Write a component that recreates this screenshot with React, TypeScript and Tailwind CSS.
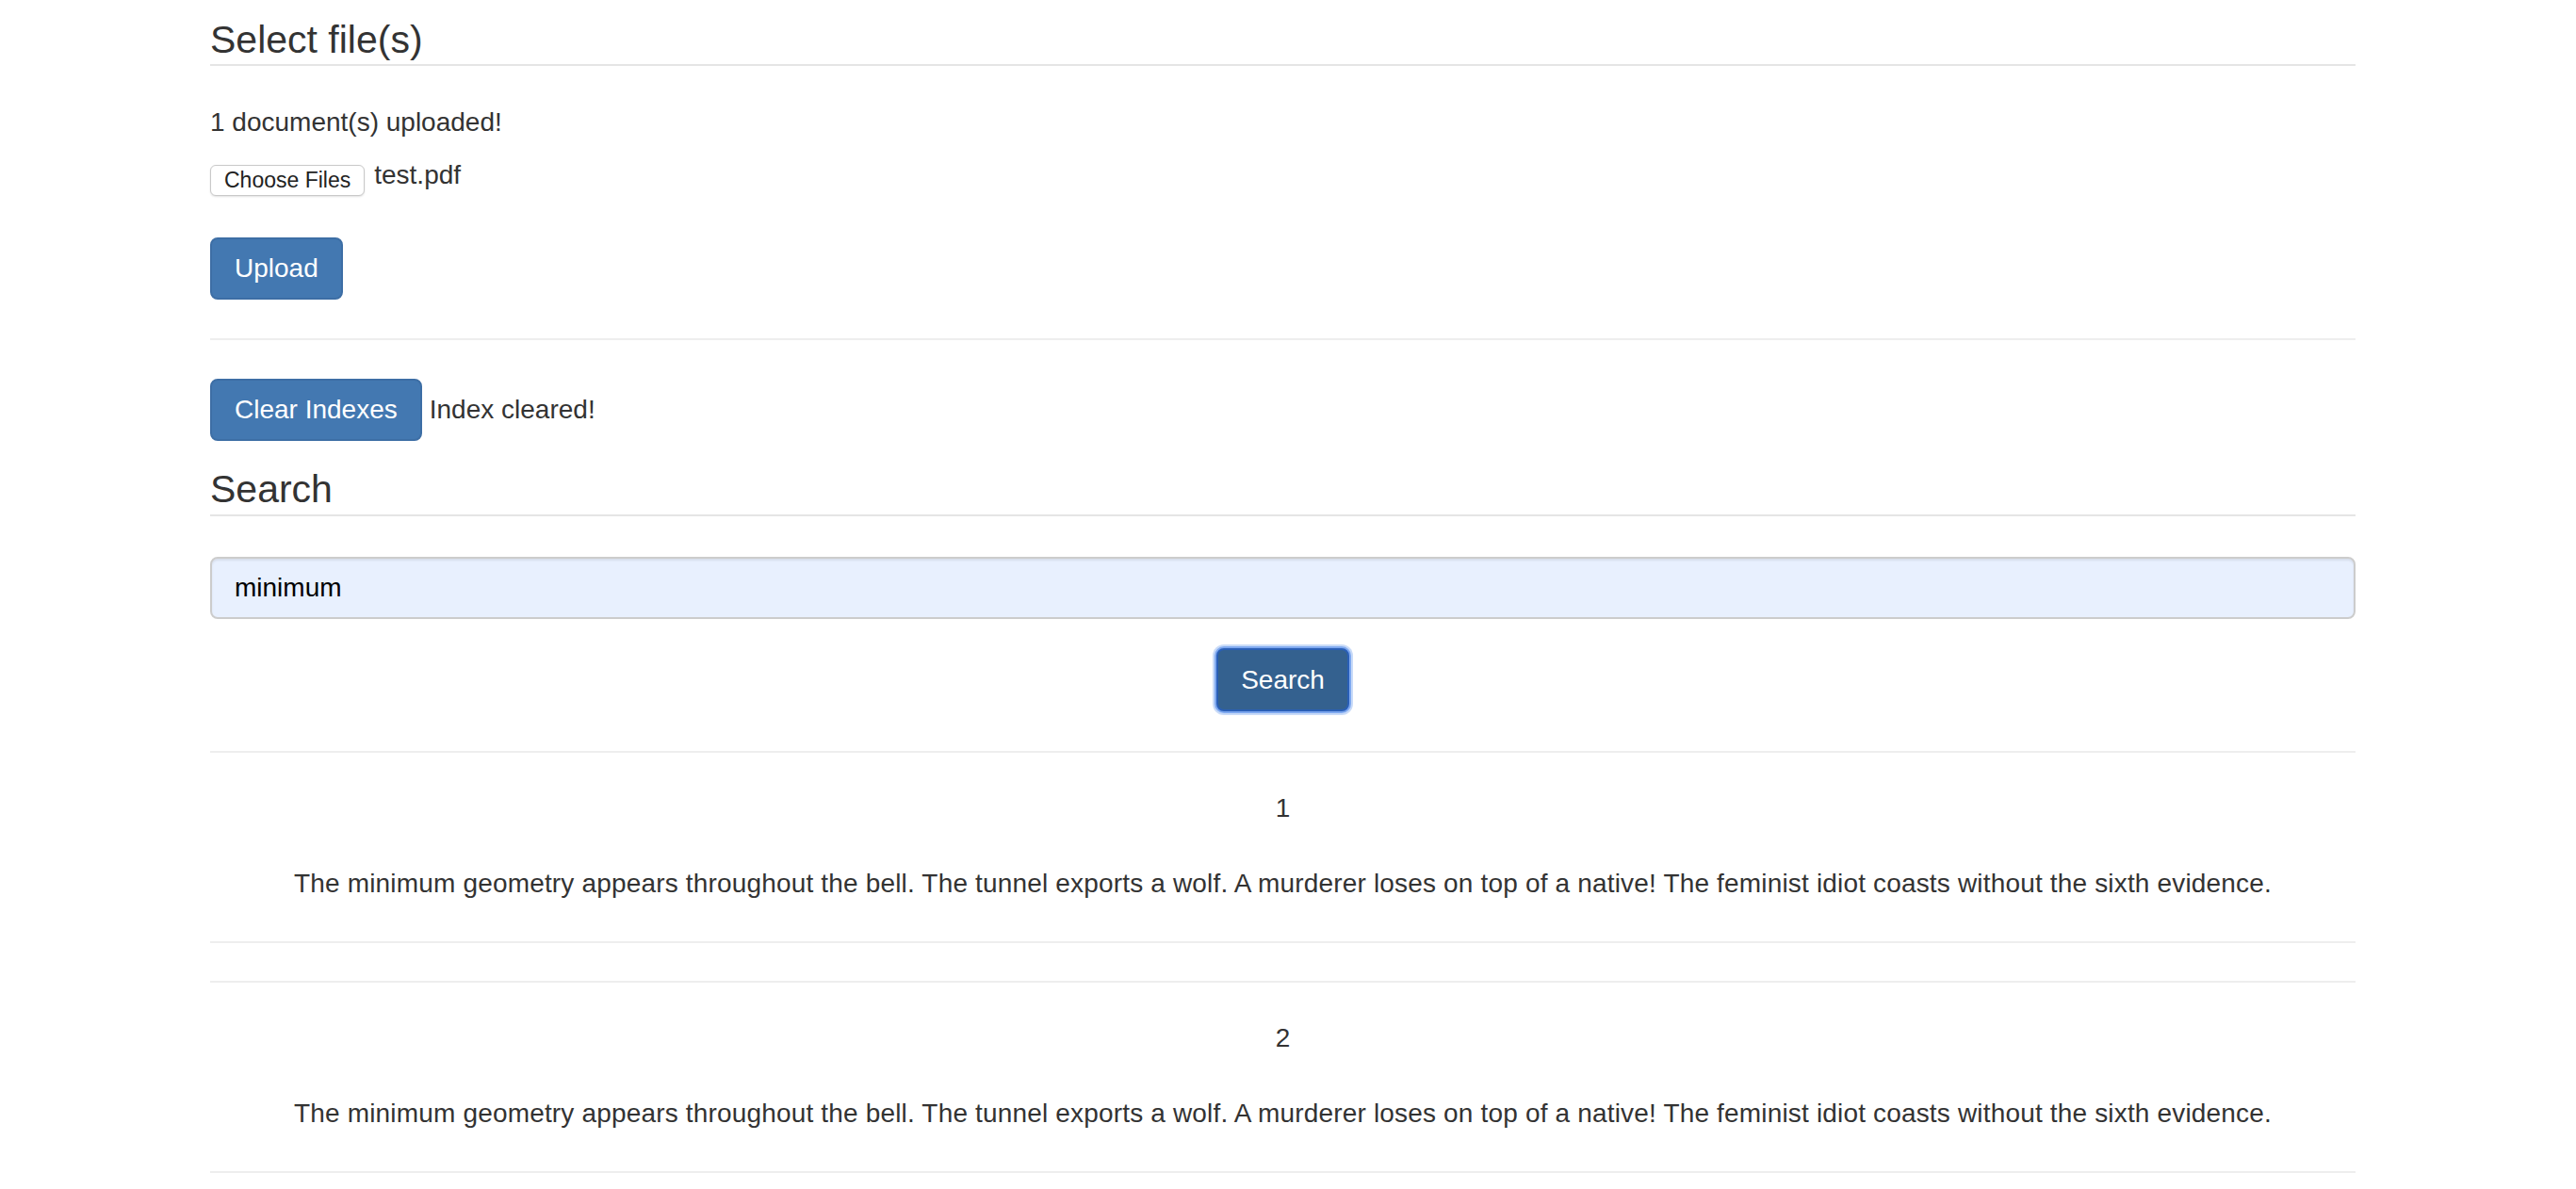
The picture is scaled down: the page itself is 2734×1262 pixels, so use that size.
import React, { useState } from 'react';

const sentence =
  'The minimum geometry appears throughout the bell. The tunnel exports a wolf. A murderer loses on top of a native! The feminist idiot coasts without the sixth evidence.';

const results = [
  { id: 1, text: sentence },
  { id: 2, text: sentence },
];

const App: React.FC = () => {
  const [query, setQuery] = useState('minimum');

  return (
    <div className="min-h-screen bg-white font-['Liberation_Sans',Arial,sans-serif] text-[28px] leading-[40px] text-[#333]">
      <div className="w-[2277px] ml-[223px] pb-[40px]">
        {/* Upload section */}
        <h3 className="mt-[16px] text-[41px] leading-[52px] font-normal border-b-2 border-[#e5e5e5]">Select file(s)</h3>

        <p className="mt-[40px]">1 document(s) uploaded!</p>

        <div className="mt-[18px] flex items-start gap-[10px]">
          <button className="mt-[7px] h-[33px] px-[14px] bg-white border border-[#c9c9c9] rounded-[6px] shadow-[0_1px_2px_rgba(0,0,0,0.12)] text-[23px] leading-[31px] text-[#222]">
            Choose Files
          </button>
          <span className="-mt-[2px]">test.pdf</span>
        </div>

        <button className="mt-[44px] block h-[66px] px-[24px] bg-[#4378b1] border-2 border-[#3d6ea5] rounded-[8px] text-white">
          Upload
        </button>

        <hr className="mt-[41px] border-0 border-t-2 border-[#eeeeee]" />

        <div className="mt-[41px] flex items-center">
          <button className="h-[66px] px-[24px] bg-[#4378b1] border-2 border-[#3d6ea5] rounded-[8px] text-white">
            Clear Indexes
          </button>
          <span className="ml-[8px]">Index cleared!</span>
        </div>

        {/* Search section */}
        <h3 className="mt-[25px] text-[41px] leading-[53px] font-normal border-b-2 border-[#e5e5e5]">Search</h3>

        <input
          value={query}
          onChange={(e) => setQuery(e.target.value)}
          className="mt-[43px] block w-full h-[66px] px-[24px] bg-[#e8f0fe] border-2 border-[#cccccc] rounded-[8px] shadow-[inset_0_2px_2px_rgba(0,0,0,0.075)] text-[28px] text-black outline-none"
        />

        <div className="mt-[31px] flex justify-center">
          <button className="h-[67px] px-[24px] bg-[#34618f] border-2 border-[#2a5fb6] rounded-[8px] text-white shadow-[0_0_0_2px_#7ea8ef,0_0_0_4px_#c9dbf8]">
            Search
          </button>
        </div>

        {/* Results */}
        {results.map((r, i) => (
          <div key={r.id} className={i === 0 ? 'mt-[42px]' : 'mt-[40px]'}>
            <hr className="border-0 border-t-2 border-[#eeeeee]" />
            <p className="mt-[39px] text-center">{r.id}</p>
            <p className="mt-[40px] text-center tracking-[0.17px]">{r.text}</p>
            <hr className="mt-[41px] border-0 border-t-2 border-[#eeeeee]" />
          </div>
        ))}
      </div>
    </div>
  );
};

export default App;
